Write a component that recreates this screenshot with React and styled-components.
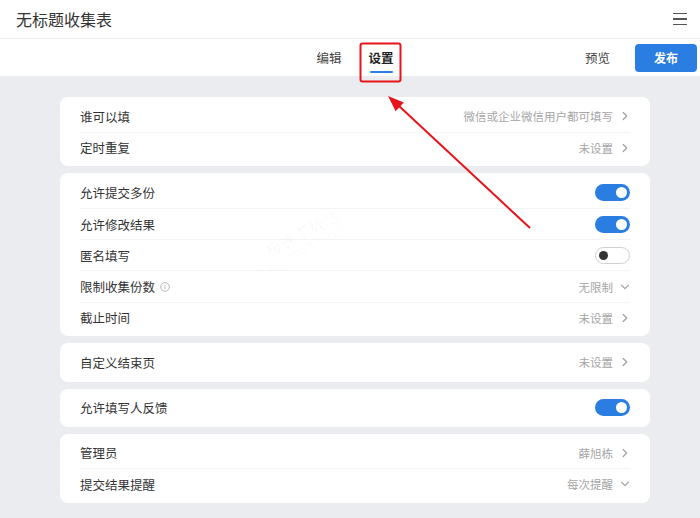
import React from 'react';
import styled, { createGlobalStyle } from 'styled-components';

const GlobalStyle = createGlobalStyle`
  body {
    margin: 0;
    background: #ebecef;
    font-family: "Noto Sans CJK SC", "Noto Sans", sans-serif;
  }
`;

const Page = styled.div`
  position: relative;
  width: 700px;
  height: 518px;
  background: #ebecef;
  overflow: hidden;
`;

const TopBar = styled.header`
  height: 38px;
  display: flex;
  align-items: center;
  justify-content: space-between;
  padding: 0 13px 0 16px;
  background: #fff;
  border-bottom: 1px solid #f1f1f3;
`;

const Title = styled.div`
  font-size: 16px;
  color: #333;
`;

const Burger = styled.div`
  display: flex;
  flex-direction: column;
  gap: 4px;
  span {
    display: block;
    width: 14px;
    height: 1.5px;
    background: #555;
  }
`;

const TabBar = styled.nav`
  height: 37px;
  display: flex;
  align-items: center;
  background: #fff;
`;

const Side = styled.div`
  flex: 1;
  display: flex;
  align-items: center;
  justify-content: ${p => (p.$end ? 'flex-end' : 'flex-start')};
  gap: 25px;
  padding-right: 3px;
`;

const Tabs = styled.div`
  display: flex;
  gap: 27px;
  padding-left: 10px;
`;

const Tab = styled.div`
  position: relative;
  height: 37px;
  line-height: 37px;
  font-size: 12.5px;
  color: ${p => (p.$active ? '#222' : '#444')};
  font-weight: ${p => (p.$active ? 700 : 400)};
  &::after {
    content: '';
    display: ${p => (p.$active ? 'block' : 'none')};
    position: absolute;
    left: 1px;
    right: 1px;
    bottom: 3px;
    height: 2px;
    border-radius: 1px;
    background: #2a7de1;
  }
`;

const Preview = styled.div`
  font-size: 12.5px;
  color: #444;
`;

const Publish = styled.button`
  width: 62px;
  height: 28px;
  border: 0;
  border-radius: 4px;
  background: #2a7de1;
  color: #fff;
  font-family: inherit;
  font-size: 12px;
  font-weight: 700;
`;

const Content = styled.main`
  display: flex;
  flex-direction: column;
  gap: 7px;
  padding: 21px 50px 0 60px;
`;

const Card = styled.section`
  background: #fff;
  border-radius: 8px;
  padding: 3.5px 0;
`;

const Row = styled.div`
  box-sizing: border-box;
  height: 31.2px;
  margin: 0 20px;
  display: flex;
  align-items: center;
  justify-content: space-between;
  & + & {
    border-top: 1px solid #f3f3f5;
  }
`;

const Label = styled.div`
  display: flex;
  align-items: center;
  gap: 5px;
  font-size: 12.5px;
  color: #333;
`;

const Value = styled.div`
  display: flex;
  align-items: center;
  gap: 7px;
  font-size: 11.5px;
  color: #a6a6a6;
`;

const Toggle = styled.div`
  width: 35px;
  height: 17px;
  box-sizing: border-box;
  border-radius: 9px;
  display: flex;
  align-items: center;
  justify-content: ${p => (p.$on ? 'flex-end' : 'flex-start')};
  padding: 0 3px;
  background: ${p => (p.$on ? '#2a7de1' : '#fff')};
  border: ${p => (p.$on ? 'none' : '1px solid #cfcfd3')};
  &::after {
    content: '';
    width: ${p => (p.$on ? 11 : 9)}px;
    height: ${p => (p.$on ? 11 : 9)}px;
    border-radius: 50%;
    background: ${p => (p.$on ? '#fff' : '#333')};
  }
`;

const Watermark = styled.div`
  position: absolute;
  left: 250px;
  top: 226px;
  transform: rotate(-28deg);
  color: rgba(0, 0, 0, 0.035);
  line-height: 1.15;
  pointer-events: none;
  b {
    display: block;
    font-size: 16px;
    font-weight: 400;
    padding-left: 16px;
  }
  i {
    display: block;
    font-style: normal;
    font-size: 12px;
    font-family: "Liberation Sans", sans-serif;
  }
`;

const Overlay = styled.svg`
  position: absolute;
  left: 0;
  top: 0;
  pointer-events: none;
`;

const Chevron = ({ down }) => (
  <svg width="10" height="10" viewBox="0 0 10 10">
    <path
      d={down ? 'M1.5 3.2 L5 6.7 L8.5 3.2' : 'M3.2 1.5 L6.7 5 L3.2 8.5'}
      fill="none"
      stroke="#a0a0a0"
      strokeWidth="1.2"
      strokeLinecap="round"
      strokeLinejoin="round"
    />
  </svg>
);

const InfoIcon = () => (
  <svg width="10" height="10" viewBox="0 0 10 10">
    <circle cx="5" cy="5" r="4.3" fill="none" stroke="#b0b0b0" strokeWidth="0.9" />
    <circle cx="5" cy="3" r="0.6" fill="#b0b0b0" />
    <path d="M5 4.4 V7.3" stroke="#b0b0b0" strokeWidth="0.9" />
  </svg>
);

const Setting = ({ label, value, down, toggle, info }) => (
  <Row>
    <Label>
      {label}
      {info && <InfoIcon />}
    </Label>
    {toggle !== undefined ? (
      <Toggle $on={toggle} />
    ) : (
      <Value>
        {value}
        <Chevron down={down} />
      </Value>
    )}
  </Row>
);

const groups = [
  [
    { label: '谁可以填', value: '微信或企业微信用户都可填写' },
    { label: '定时重复', value: '未设置' },
  ],
  [
    { label: '允许提交多份', toggle: true },
    { label: '允许修改结果', toggle: true },
    { label: '匿名填写', toggle: false },
    { label: '限制收集份数', value: '无限制', down: true, info: true },
    { label: '截止时间', value: '未设置' },
  ],
  [{ label: '自定义结束页', value: '未设置' }],
  [{ label: '允许填写人反馈', toggle: true }],
  [
    { label: '管理员', value: '薛旭栋' },
    { label: '提交结果提醒', value: '每次提醒', down: true },
  ],
];

export default function App() {
  return (
    <Page>
      <GlobalStyle />
      <TopBar>
        <Title>无标题收集表</Title>
        <Burger>
          <span />
          <span />
          <span />
        </Burger>
      </TopBar>
      <TabBar>
        <Side />
        <Tabs>
          <Tab>编辑</Tab>
          <Tab $active>设置</Tab>
        </Tabs>
        <Side $end>
          <Preview>预览</Preview>
          <Publish>发布</Publish>
        </Side>
      </TabBar>
      <Content>
        {groups.map((rows, i) => (
          <Card key={i}>
            {rows.map(r => (
              <Setting key={r.label} {...r} />
            ))}
          </Card>
        ))}
      </Content>
      <Watermark>
        <b>极速下载站</b>
        <i>www.mydown.com</i>
      </Watermark>
      <Overlay width="700" height="518">
        <rect x="360.5" y="43.5" width="40" height="38" rx="2" fill="none" stroke="#e8141b" strokeWidth="2" />
        <line x1="530" y1="228" x2="399" y2="106" stroke="#e8141b" strokeWidth="2" />
        <polygon points="388,96 403.8,102.5 395.6,111.3" fill="#e8141b" />
      </Overlay>
    </Page>
  );
}
